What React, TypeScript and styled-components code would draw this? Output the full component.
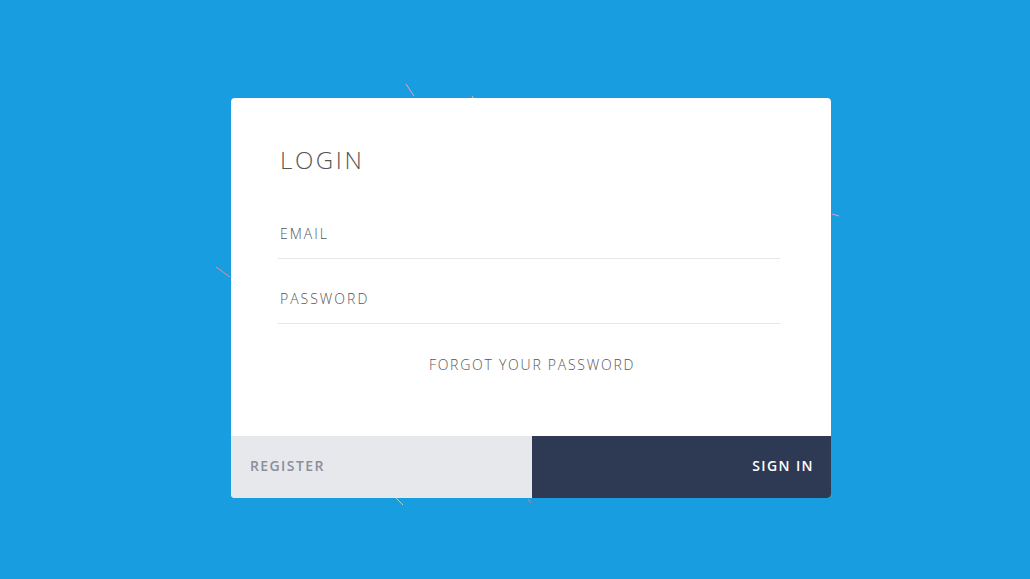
import React from "react";
import styled, { createGlobalStyle } from "styled-components";

const Global = createGlobalStyle`
  html, body { margin: 0; padding: 0; }
  body {
    background: #189ee0;
    font-family: "Open Sans", "Liberation Sans", sans-serif;
    -webkit-font-smoothing: antialiased;
  }
`;

const Page = styled.div`
  position: relative;
  width: 1030px;
  height: 579px;
  box-sizing: border-box;
  padding: 98px 0 0 231px;
  background: #189ee0;
  overflow: hidden;
`;

const Card = styled.form`
  position: relative;
  z-index: 1;
  width: 600px;
  height: 400px;
  background: #fff;
  border-radius: 4px;
  overflow: hidden;
  display: flex;
  flex-direction: column;
`;

const Body = styled.div`
  flex: 1;
  display: flex;
  flex-direction: column;
  padding: 50px 51px 0 47px;
`;

const Title = styled.h1`
  margin: 0 0 0 2px;
  font-size: 24px;
  line-height: 1;
  font-weight: 300;
  letter-spacing: 2.6px;
  color: #555;
`;

const Field = styled.input<{ $h: number }>`
  display: block;
  width: 100%;
  box-sizing: border-box;
  border: none;
  border-bottom: 1px solid #e6e6e6;
  outline: none;
  background: transparent;
  font-family: "Open Sans", "Liberation Sans", sans-serif;
  font-size: 14px;
  font-weight: 300;
  letter-spacing: 2px;
  color: #444;
  padding: 0 0 0 2px;
  height: ${(p) => p.$h}px;
  line-height: 20px;
  &::placeholder {
    color: #555;
    opacity: 1;
  }
`;

const Fields = styled.div`
  margin-top: 37px;
  display: flex;
  flex-direction: column;
  gap: 15px;
`;

const Forgot = styled.a`
  margin-top: 31px;
  align-self: center;
  text-align: center;
  font-size: 14px;
  font-weight: 300;
  letter-spacing: 1.75px;
  color: #555;
  text-decoration: none;
  padding-left: 6px;
`;

const Footer = styled.div`
  height: 62px;
  display: grid;
  grid-template-columns: 301px 1fr;
`;

const FooterButton = styled.button<{ $primary?: boolean }>`
  border: none;
  margin: 0;
  font-family: "Open Sans", "Liberation Sans", sans-serif;
  font-size: 14px;
  font-weight: 600;
  letter-spacing: 1.4px;
  display: flex;
  align-items: center;
  justify-content: ${(p) => (p.$primary ? "flex-end" : "flex-start")};
  padding: ${(p) => (p.$primary ? "0 17px 3px 0" : "0 0 3px 19px")};
  background: ${(p) => (p.$primary ? "#2e3a53" : "#e7e8eb")};
  color: ${(p) => (p.$primary ? "#fff" : "#8a8e9c")};
  cursor: pointer;
`;

const Spark = styled.svg`
  position: absolute;
  left: 0;
  top: 0;
  pointer-events: none;
`;

export default function App() {
  return (
    <>
      <Global />
      <Page>
        <Spark width="1030" height="579">
          <line x1="406" y1="84" x2="414" y2="96" stroke="#f3a0b0" strokeWidth="1" />
          <line x1="472" y1="96" x2="474" y2="99" stroke="#e8c08a" strokeWidth="1" />
          <line x1="832" y1="214" x2="839" y2="216" stroke="#e79ac8" strokeWidth="1" />
          <line x1="216" y1="267" x2="230" y2="277" stroke="#f08a8a" strokeWidth="1" />
          <line x1="396" y1="498" x2="403" y2="505" stroke="#a0d8c0" strokeWidth="1" />
          <line x1="528" y1="499" x2="531" y2="503" stroke="#d080a0" strokeWidth="1" />
        </Spark>
        <Card onSubmit={(e) => e.preventDefault()}>
          <Body>
            <Title>LOGIN</Title>
            <Fields>
              <Field $h={50} type="email" placeholder="EMAIL" />
              <Field $h={50} type="password" placeholder="PASSWORD" />
            </Fields>
            <Forgot href="#">FORGOT YOUR PASSWORD</Forgot>
          </Body>
          <Footer>
            <FooterButton type="button">REGISTER</FooterButton>
            <FooterButton type="submit" $primary>
              SIGN IN
            </FooterButton>
          </Footer>
        </Card>
      </Page>
    </>
  );
}
